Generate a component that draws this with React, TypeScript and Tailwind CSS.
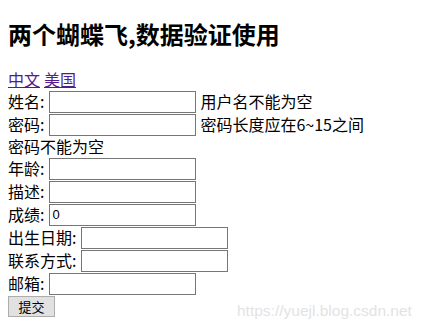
import React from 'react';

const FIELDS: { label: string; value?: string; error?: string }[] = [
  { label: '姓名:', error: '用户名不能为空' },
  { label: '密码:', error: '密码长度应在6~15之间' },
];

const FIELDS2: { label: string; value?: string }[] = [
  { label: '年龄:' },
  { label: '描述:' },
  { label: '成绩:', value: '0' },
  { label: '出生日期:' },
  { label: '联系方式:' },
  { label: '邮箱:' },
];

const Row = ({ label, value, error }: { label: string; value?: string; error?: string }) => (
  <div className="flex h-[23px] items-center">
    <span>{label}</span>
    <input
      type="text"
      defaultValue={value}
      className="ml-[5px] h-[22px] w-[147px] border border-[#767676] bg-white px-[2px] text-[13px] font-['Liberation_Sans',sans-serif] text-black outline-none"
    />
    {error && <span className="ml-[4px]">{error}</span>}
  </div>
);

export default function App() {
  return (
    <div className="relative h-[324px] w-[426px] overflow-hidden bg-white pl-[8px] font-['Noto_Sans_CJK_SC','Noto_Sans',sans-serif] text-[16px] leading-[21px] text-black">
      <h2 className="mt-[18px] text-[24px] font-bold leading-[32px]">两个蝴蝶飞,数据验证使用</h2>
      <div className="mt-[19px] flex h-[21px] items-center gap-[4px] text-[#551a8b]">
        <a href="#" className="underline">中文</a>
        <a href="#" className="underline">美国</a>
      </div>
      {FIELDS.map((f) => (
        <Row key={f.label} {...f} />
      ))}
      <div className="h-[21px]">密码不能为空</div>
      {FIELDS2.map((f) => (
        <Row key={f.label} {...f} />
      ))}
      <button
        type="button"
        className="h-[21px] w-[47px] border border-[#adadad] bg-[#e1e1e1] text-[13px] leading-[19px]"
      >
        提交
      </button>
      <div className="absolute left-[237px] top-[300px] font-['Liberation_Sans',sans-serif] text-[15.5px] text-[#e3e3e3]">
        https://yuejl.blog.csdn.net
      </div>
    </div>
  );
}
